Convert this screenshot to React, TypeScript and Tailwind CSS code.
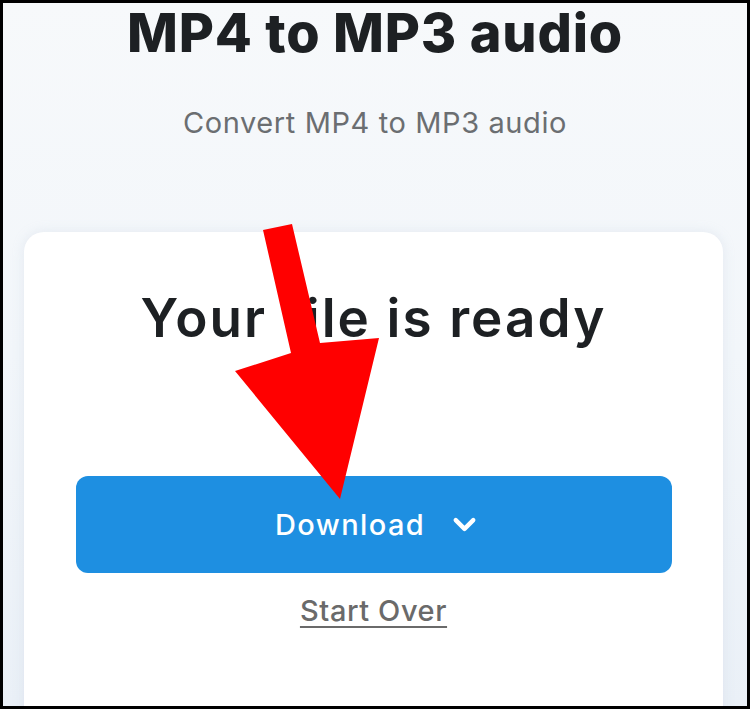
import { ChevronDown } from 'lucide-react'

function Arrow() {
  // red annotation arrow pointing at the download button
  return (
    <svg className="pointer-events-none absolute left-0 top-0" width="750" height="709" viewBox="0 0 750 709">
      <polygon
        points="260,227 289,221 317,340 376,335 337,496 232,368 288,350"
        fill="#ff0000"
      />
    </svg>
  )
}

function App() {
  return (
    <div
      className="relative h-[709px] w-[750px] overflow-hidden border-[3px] border-black bg-gradient-to-b from-[#f7f9fb] via-[#f2f6fa] to-[#eaf0f7]"
      style={{ fontFamily: 'Inter, "Noto Sans", sans-serif' }}
    >
      <div className="flex flex-col items-center">
        <h1 className="mt-[3px] text-[54px] font-extrabold leading-none tracking-[0.8px] text-[#1d2023]">
          MP4 to MP3 audio
        </h1>
        <p className="mt-[48px] text-[29px] leading-none tracking-[0.6px] text-[#6b6e71]">Convert MP4 to MP3 audio</p>

        {/* Result card */}
        <div className="mt-[95px] ml-[21px] mr-[24px] flex h-[520px] flex-col items-center self-stretch rounded-[20px] bg-white pt-[60px] shadow-[0_0_12px_rgba(180,195,215,0.25)]">
          <h2 className="text-[53px] font-semibold leading-none tracking-[2.1px] text-[#1d2023]">Your file is ready</h2>

          <button className="mt-[131px] flex h-[97px] w-[596px] items-center justify-center gap-[22px] rounded-[12px] bg-[#1e8fe1] pl-[10px] text-white">
            <span className="text-[29px] font-medium leading-none tracking-[1.4px]">Download</span>
            <ChevronDown size={35} strokeWidth={3} />
          </button>

          <a className="mt-[23px] text-[29px] font-medium leading-none tracking-[0.6px] text-[#6a6a6a] underline decoration-2 underline-offset-[5px]">
            Start Over
          </a>
        </div>
      </div>
      <Arrow />
    </div>
  )
}

export default App
